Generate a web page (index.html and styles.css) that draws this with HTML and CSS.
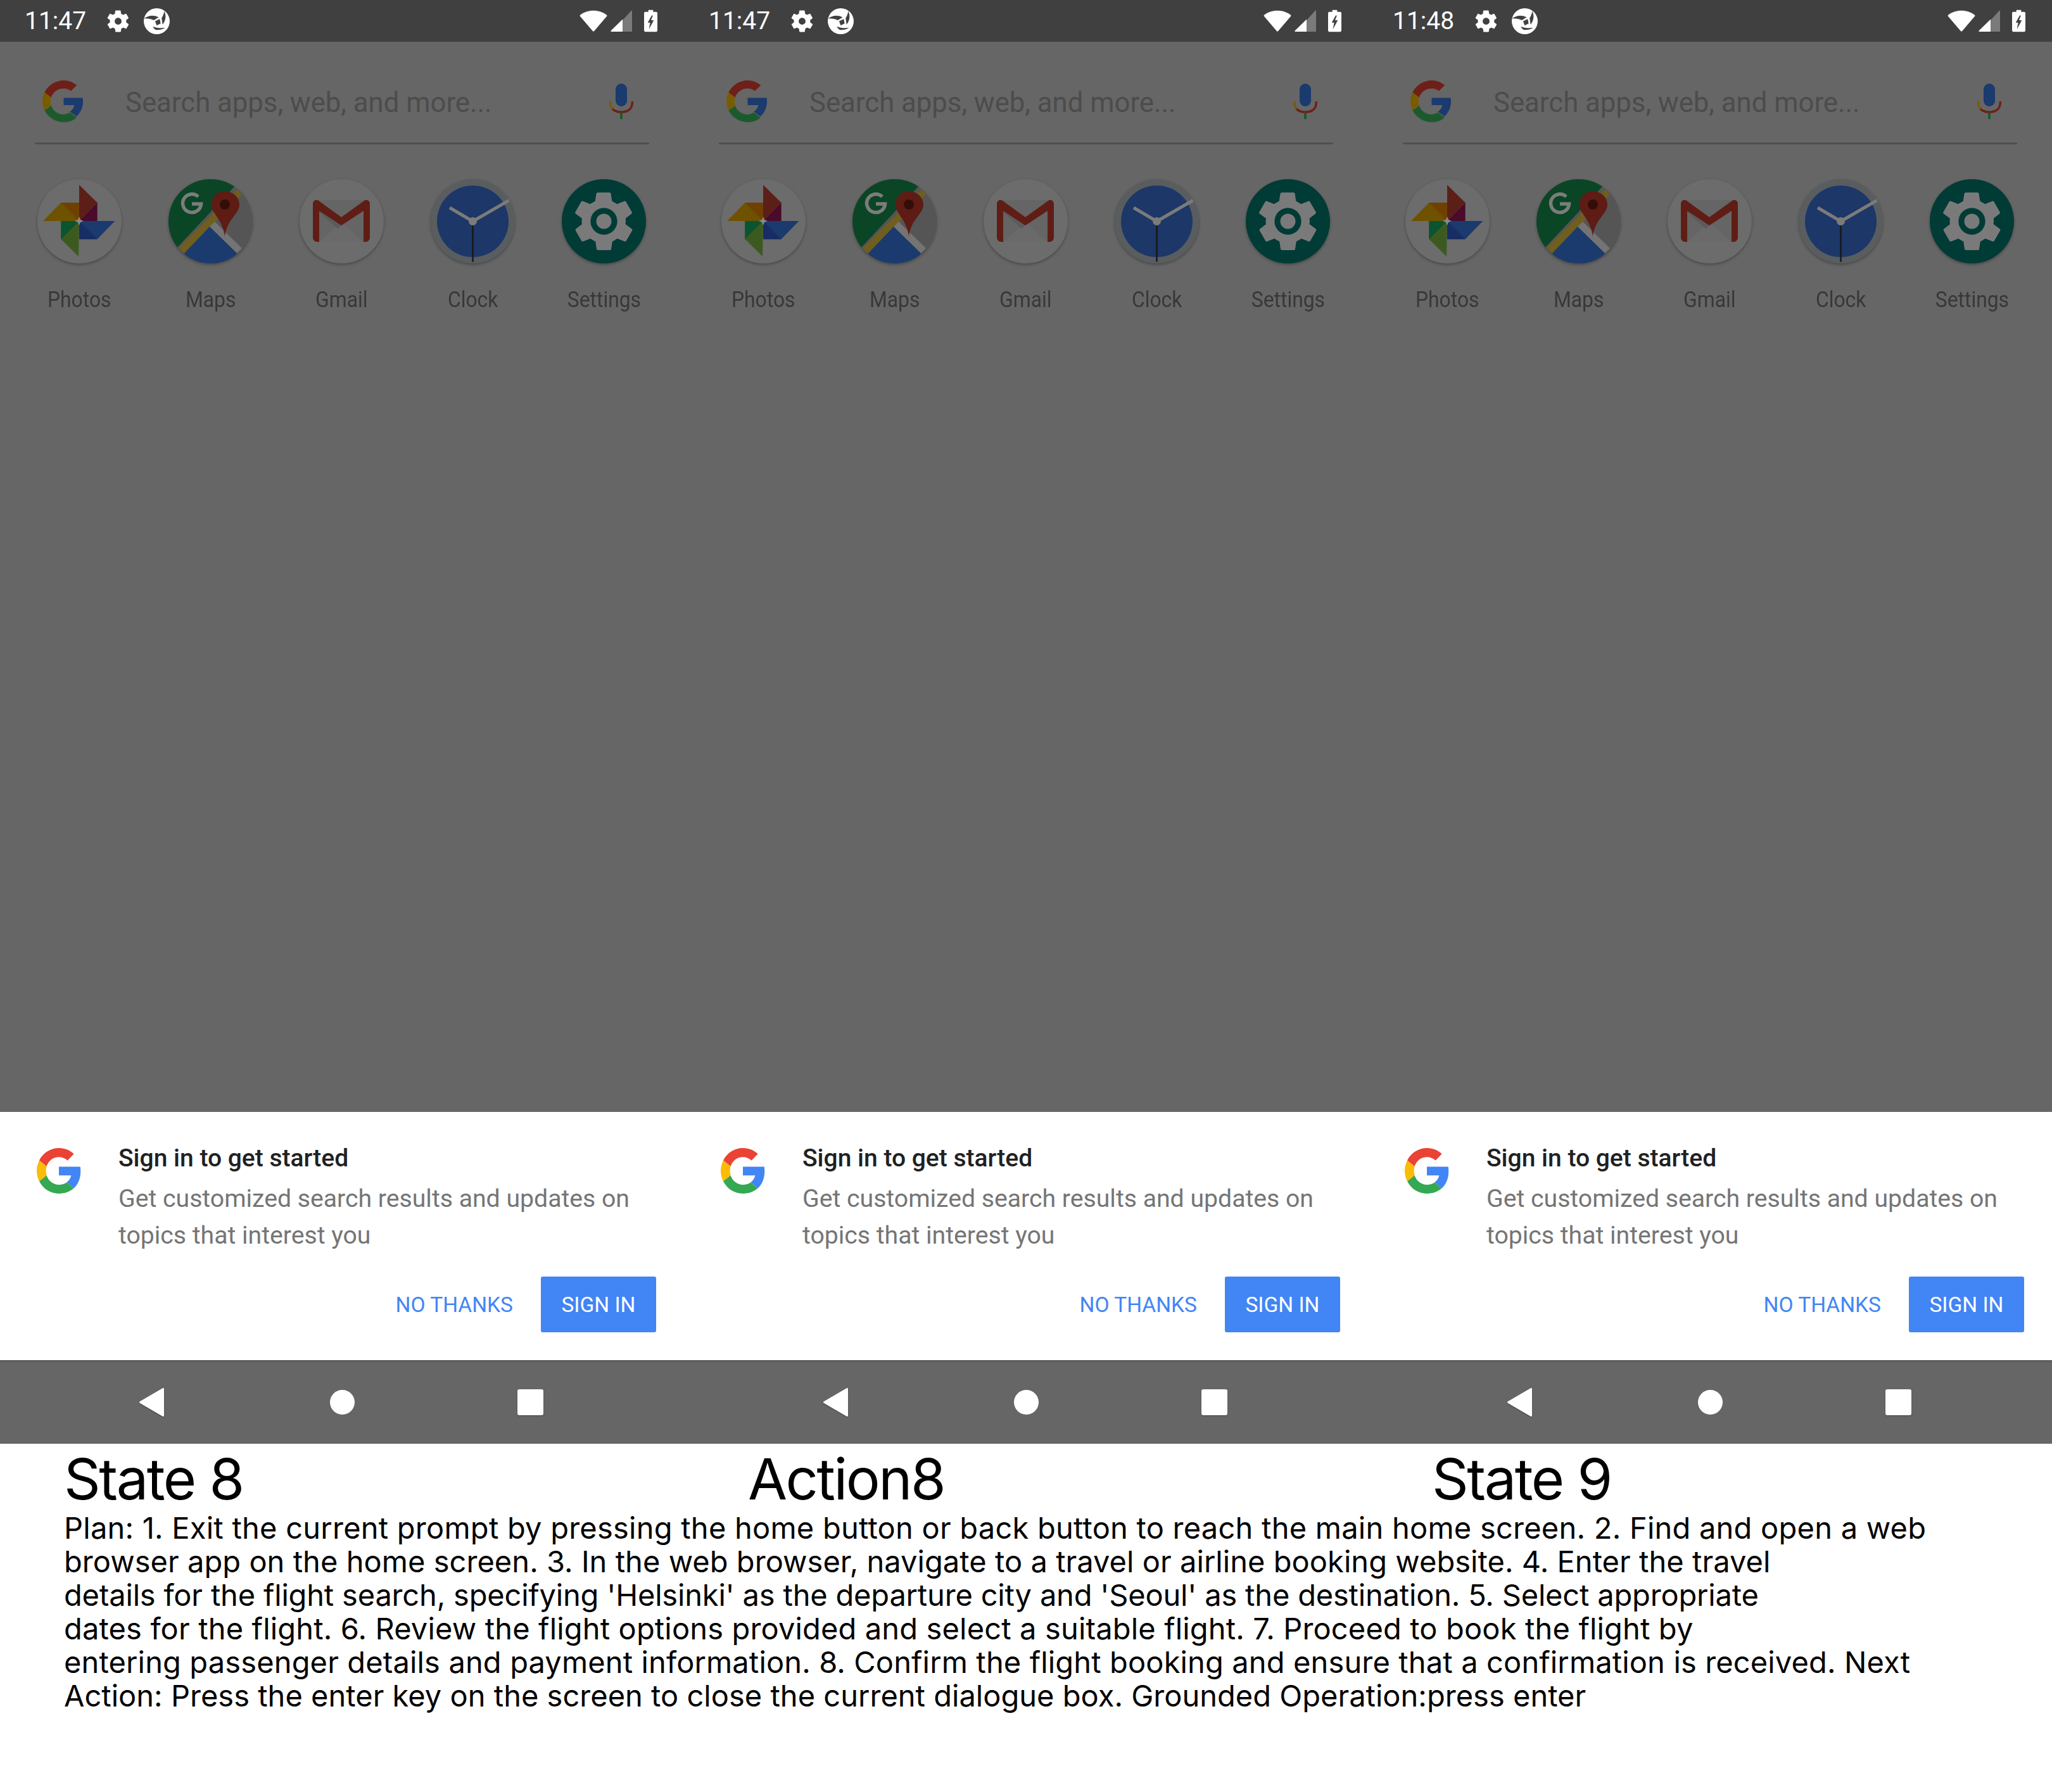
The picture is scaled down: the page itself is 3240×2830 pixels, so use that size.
FILE: index.html
```html
<!DOCTYPE html>
<html lang="en">
<head>
<meta charset="utf-8">
<title>State 8</title>
<link rel="stylesheet" href="styles.css">
</head>
<body>
<svg class="defs" width="0" height="0" aria-hidden="true">
  <defs>
    <symbol id="g-dim" viewBox="1 0.5 44 47" preserveAspectRatio="none">
      <path fill="#1b3a6e" d="M45 24c0-1.600-.1-2.800-.4-4H24v8.200h11.700c-.5 3-2.200 5.600-5 7.300l7.200 5.600C42.300 37 45 31 45 24z"/>
      <path fill="#7a5c00" d="M10.500 19.500 3.300 13.900C1.800 17 1 20.400 1 24s.8 7 2.300 10.100l7.200-5.600C10 27 9.700 25.600 9.700 24s.3-3 .8-4.500z"/>
      <path fill="#6e2018" d="M24 9.500c3.600 0 6.300 1.500 7.800 2.900l6.500-6.300C34.500 2.500 29.700.5 24 .5 15 .5 7.200 6 3.300 13.900l7.200 5.600C12.300 13.700 17.700 9.500 24 9.500z"/>
      <path fill="#1c5a2d" d="M24 47.500c5.900 0 10.900-2 14-5.400l-7.200-5.600c-2 1.400-4 2.300-6.800 2.300-6.300 0-11.700-4.200-13.500-10l-7.200 5.600C7.200 42 15 47.500 24 47.500z"/>
    </symbol>
    <symbol id="g-color" viewBox="0.5 0.5 47 47" preserveAspectRatio="none">
      <path fill="#4285f4" d="M47 24.500c0-1.700-.1-3.300-.4-4.800H24v9.100h13c-.6 3-2.300 5.500-4.900 7.200l7.800 6c4.500-4.200 7.100-10.300 7.100-17.500z"/>
      <path fill="#fbbc05" d="M11 19.300 3.200 13.200C1.500 16.500.5 20.200.5 24s1 7.500 2.700 10.800l7.900-6.100C10.600 27.200 10.300 25.600 10.300 24s.3-3.200.7-4.700z"/>
      <path fill="#ea4335" d="M24 9.800c3.500 0 6.600 1.200 9.100 3.600l6.800-6.800C35.800 2.800 30.400.5 24 .5 14.800.5 6.900 5.800 3.200 13.200l7.800 6.100C12.800 13.700 18 9.800 24 9.800z"/>
      <path fill="#34a853" d="M24 47.500c6.300 0 11.700-2.100 15.900-5.500l-7.800-6c-2.200 1.500-4.900 2.300-8.100 2.300-6 0-11.200-4-13-9.600l-7.800 6.100C6.900 42.200 14.800 47.500 24 47.500z"/>
    </symbol>
    <symbol id="gear" viewBox="0 0 24 24">
      <path fill="currentColor" fill-rule="evenodd" d="M19.400 13c0-.3.1-.6.1-1s0-.7-.1-1l2.100-1.600c.2-.2.2-.4.100-.6l-2-3.500c-.1-.2-.4-.3-.6-.2l-2.500 1c-.5-.4-1.100-.7-1.700-1l-.4-2.600c0-.2-.2-.4-.5-.4h-4c-.2 0-.4.200-.5.400l-.4 2.600c-.6.300-1.200.6-1.700 1l-2.500-1c-.2-.1-.5 0-.6.200l-2 3.500c-.1.200-.1.400.1.600L4.500 11c0 .3-.1.600-.1 1s0 .7.1 1l-2.100 1.600c-.2.200-.2.400-.1.600l2 3.500c.1.200.4.300.6.200l2.500-1c.5.400 1.100.7 1.700 1l.4 2.600c.1.200.3.400.5.400h4c.3 0 .5-.2.500-.4l.4-2.600c.6-.3 1.200-.6 1.700-1l2.500 1c.2.100.5 0 .6-.2l2-3.500c.1-.2.1-.4-.1-.6L19.400 13zM12 15.200a3.200 3.200 0 1 1 0-6.400 3.200 3.200 0 0 1 0 6.400z"/>
    </symbol>
    <symbol id="shutter" viewBox="0 0 40 40">
      <circle cx="20" cy="20" r="20" fill="#fff"/>
      <path fill="#404040" d="M.5 16C7 11 15 10 23 14l-7.500 4.500C11 16 6 15.500.5 16z"/>
      <path fill="#404040" d="M31.500 4.500c3.500 7 2.500 14.500-2.500 20.500l-1.500-10C30 11.500 31 8.500 31.500 4.500z"/>
      <path fill="#404040" d="M14 28c6 2.500 12 3 19 2-5 3-10 4-14.500 3.200-2-.5-3.500-3-4.500-5.200z"/>
      <path fill="#404040" d="M17.500 20 24.500 16.500l1.500 7-6 3z"/>
    </symbol>
    <symbol id="wifi" viewBox="0 0 44 36">
      <path fill="#fff" d="M22 34.500a1.500 1.500 0 0 1-1.200-.6L1 10.800C.3 10 .5 9 1.300 8.500 7 4.200 14 1.800 22 1.800S37 4.200 42.700 8.500c.8.500 1 1.500.3 2.300L23.200 33.900a1.500 1.500 0 0 1-1.200.6z"/>
    </symbol>
    <symbol id="signal" viewBox="0 0 34 34">
      <path fill="#7a7a7a" d="M33 0.500c.6 0 1 .4 1 1V34H19V16z"/>
      <path fill="#fff" d="M19 14.500V34H1.500C.5 34 0 33 .8 32.200z"/>
    </symbol>
    <symbol id="battery" viewBox="0 0 22 36">
      <path fill="#fff" fill-rule="evenodd" d="M7 0h8v3h5c1 0 2 1 2 2v29c0 1-1 2-2 2H2c-1 0-2-1-2-2V5c0-1 1-2 2-2h5zM12.500 9 6 21h4l-2 11 8-15h-4.500l3-8z"/>
    </symbol>
    <symbol id="mic" viewBox="0 0 38 56">
      <rect x="10" y="0" width="18" height="36" rx="9" fill="#1b3a6e"/>
      <path d="M1.500 28c0 6 .8 9 3.500 12" fill="none" stroke="#7a5c00" stroke-width="3.500"/>
      <path d="M5 40c3.500 3.500 9 5 14 5s10.500-1.500 14-5c2.700-3 3.500-6 3.500-12" fill="none" stroke="#6e2018" stroke-width="3.500"/>
      <rect x="17" y="46" width="4" height="10" fill="#1c5a2d"/>
    </symbol>
    <symbol id="back" viewBox="0 0 39 45">
      <path fill="#fff" stroke="#fff" stroke-width="3" stroke-linejoin="round" d="M37.500 1.500v42L1.500 22.500z"/>
    </symbol>
    <symbol id="app-photos" viewBox="0 0 133 133">
      <circle cx="66.500" cy="66.500" r="66.500" fill="#6c6c6c"/>
      <path fill="#6f5200" d="M9 66 37.400 37H66v29z"/>
      <path fill="#704000" d="M37.400 37H66v29z"/>
      <path fill="#5c1f17" d="M66 9l28.600 28L66 66z"/>
      <path fill="#4a0a2a" d="M94.600 37v29H66z"/>
      <path fill="#1b3a6e" d="M66 66h56.400L94.600 94.700H66z"/>
      <path fill="#172d63" d="M66 66l28.600 28.700H66z"/>
      <path fill="#3c5a1f" d="M37.400 66H66l-1 56-27.600-27.300z"/>
      <path fill="#0a5530" d="M37.400 66H66L37.400 94.700z"/>
      <path fill="#8a8a8a" d="m66 59 2 5 5 2-5 2-2 5-2-5-5-2 5-2z"/>
    </symbol>
    <symbol id="app-maps" viewBox="0 0 133 133">
      <clipPath id="maps-clip"><circle cx="66.500" cy="66.500" r="66.500"/></clipPath>
      <g clip-path="url(#maps-clip)">
        <rect width="133" height="133" fill="#555"/>
        <path fill="#0a4526" d="M0 0h115L10 112 0 125z"/>
        <path fill="#6f5e1e" d="M109 16l7 8L25 117l-9-8z"/>
        <path fill="#747474" d="M73 67 116 109l-8 8L65 75z"/>
        <path fill="#1b3a6e" d="M65 75l43 42-10 16H30l-5-16z"/>
        <path fill="#5e1c14" d="M89 19c-13 0-21 10-21 21 0 15 17 22 21 50 4-28 23-35 23-50 0-11-10-21-23-21z"/>
        <circle cx="89" cy="40" r="8" fill="#340d09"/>
        <path fill="none" stroke="#7c7c7c" stroke-width="5.500" d="M47 27.500a14.500 14.500 0 1 0 4.500 11.500H37"/>
      </g>
    </symbol>
    <symbol id="app-gmail" viewBox="0 0 133 133">
      <circle cx="66.500" cy="66.500" r="66.500" fill="#6c6c6c"/>
      <path fill="#656565" d="M25 33h82v66H25z"/>
      <path fill="#6a6a6a" d="M31 99 66 68l35 31z"/>
      <path fill="#5b5b5b" d="M31 45 66 73 60 78 31 52z"/>
      <path fill="#5f1d16" d="M21 39c0-5 5-8 9-5l36 26 36-26c4-3 9 0 9 5v53c0 4-3 7-7 7h-3V50L66 73 31 50v49h-3c-4 0-7-3-7-7z"/>
    </symbol>
    <symbol id="app-clock" viewBox="0 0 133 133">
      <circle cx="66.500" cy="66.500" r="66.500" fill="#595d5f"/>
      <circle cx="66.500" cy="66.500" r="56.500" fill="#1c3768"/>
      <path stroke="#7b7b7b" stroke-width="5" fill="none" d="M30 45 66.500 66.500l57-33"/>
      <path stroke="#181818" stroke-width="2.500" d="M66.500 66.500v64"/>
      <circle cx="66.500" cy="66.500" r="6.500" fill="#7b7b7b"/>
    </symbol>
    <symbol id="app-settings" viewBox="0 0 133 133">
      <circle cx="66.500" cy="66.500" r="66.500" fill="#003b35"/>
      <g transform="translate(66.500 66.500) scale(4.600) translate(-12 -12)">
        <path fill="#7a7a7a" fill-rule="evenodd" d="M19.400 13c0-.3.1-.6.1-1s0-.7-.1-1l2.100-1.600c.2-.2.2-.4.100-.6l-2-3.500c-.1-.2-.4-.3-.6-.2l-2.500 1c-.5-.4-1.100-.7-1.700-1l-.4-2.600c0-.2-.2-.4-.5-.4h-4c-.2 0-.4.200-.5.400l-.4 2.600c-.6.300-1.200.6-1.700 1l-2.500-1c-.2-.1-.5 0-.6.200l-2 3.500c-.1.200-.1.400.1.600L4.500 11c0 .3-.1.600-.1 1s0 .7.1 1l-2.100 1.600c-.2.200-.2.400-.1.600l2 3.500c.1.200.4.300.6.200l2.500-1c.5.400 1.100.7 1.700 1l.4 2.600c.1.200.3.400.5.400h4c.3 0 .5-.2.500-.4l.4-2.600c.6-.3 1.200-.6 1.700-1l2.500 1c.2.100.5 0 .6-.2l2-3.500c.1-.2.1-.4-.1-.6L19.400 13zM12 16.600a4.600 4.600 0 1 1 0-9.200 4.600 4.600 0 0 1 0 9.200z"/>
      </g>
      <circle cx="66.500" cy="66.500" r="12" fill="#7a7a7a"/>
    </symbol>
  </defs>
</svg>

<main class="page">
  <div class="screens">
    <section class="screen">
      <header class="status"><span class="time">11:47</span><svg class="st-gear"><use href="#gear"/></svg><svg class="st-shutter"><use href="#shutter"/></svg><span class="grow"></span><svg class="st-wifi"><use href="#wifi"/></svg><svg class="st-signal"><use href="#signal"/></svg><svg class="st-battery"><use href="#battery"/></svg></header>
      <div class="home">
        <div class="search"><svg class="search-g"><use href="#g-dim"/></svg><span class="search-text">Search apps, web, and more...</span><svg class="search-mic"><use href="#mic"/></svg></div>
        <div class="apps">
          <div class="app"><svg class="app-icon"><use href="#app-photos"/></svg><span class="app-label">Photos</span></div>
          <div class="app"><svg class="app-icon"><use href="#app-maps"/></svg><span class="app-label">Maps</span></div>
          <div class="app"><svg class="app-icon"><use href="#app-gmail"/></svg><span class="app-label">Gmail</span></div>
          <div class="app"><svg class="app-icon"><use href="#app-clock"/></svg><span class="app-label">Clock</span></div>
          <div class="app"><svg class="app-icon"><use href="#app-settings"/></svg><span class="app-label">Settings</span></div>
        </div>
      </div>
      <div class="sheet">
        <div class="sheet-main"><svg class="sheet-g"><use href="#g-color"/></svg><div class="sheet-copy"><h2 class="sheet-title">Sign in to get started</h2><p class="sheet-text">Get customized search results and updates on<br>topics that interest you</p></div></div>
        <div class="sheet-actions"><span class="btn-text">NO THANKS</span><span class="btn-fill">SIGN IN</span></div>
      </div>
      <nav class="nav"><svg class="nav-back"><use href="#back"/></svg><span class="nav-home"></span><span class="nav-recent"></span></nav>
    </section>
    <section class="screen">
      <header class="status"><span class="time">11:47</span><svg class="st-gear"><use href="#gear"/></svg><svg class="st-shutter"><use href="#shutter"/></svg><span class="grow"></span><svg class="st-wifi"><use href="#wifi"/></svg><svg class="st-signal"><use href="#signal"/></svg><svg class="st-battery"><use href="#battery"/></svg></header>
      <div class="home">
        <div class="search"><svg class="search-g"><use href="#g-dim"/></svg><span class="search-text">Search apps, web, and more...</span><svg class="search-mic"><use href="#mic"/></svg></div>
        <div class="apps">
          <div class="app"><svg class="app-icon"><use href="#app-photos"/></svg><span class="app-label">Photos</span></div>
          <div class="app"><svg class="app-icon"><use href="#app-maps"/></svg><span class="app-label">Maps</span></div>
          <div class="app"><svg class="app-icon"><use href="#app-gmail"/></svg><span class="app-label">Gmail</span></div>
          <div class="app"><svg class="app-icon"><use href="#app-clock"/></svg><span class="app-label">Clock</span></div>
          <div class="app"><svg class="app-icon"><use href="#app-settings"/></svg><span class="app-label">Settings</span></div>
        </div>
      </div>
      <div class="sheet">
        <div class="sheet-main"><svg class="sheet-g"><use href="#g-color"/></svg><div class="sheet-copy"><h2 class="sheet-title">Sign in to get started</h2><p class="sheet-text">Get customized search results and updates on<br>topics that interest you</p></div></div>
        <div class="sheet-actions"><span class="btn-text">NO THANKS</span><span class="btn-fill">SIGN IN</span></div>
      </div>
      <nav class="nav"><svg class="nav-back"><use href="#back"/></svg><span class="nav-home"></span><span class="nav-recent"></span></nav>
    </section>
    <section class="screen">
      <header class="status"><span class="time">11:48</span><svg class="st-gear"><use href="#gear"/></svg><svg class="st-shutter"><use href="#shutter"/></svg><span class="grow"></span><svg class="st-wifi"><use href="#wifi"/></svg><svg class="st-signal"><use href="#signal"/></svg><svg class="st-battery"><use href="#battery"/></svg></header>
      <div class="home">
        <div class="search"><svg class="search-g"><use href="#g-dim"/></svg><span class="search-text">Search apps, web, and more...</span><svg class="search-mic"><use href="#mic"/></svg></div>
        <div class="apps">
          <div class="app"><svg class="app-icon"><use href="#app-photos"/></svg><span class="app-label">Photos</span></div>
          <div class="app"><svg class="app-icon"><use href="#app-maps"/></svg><span class="app-label">Maps</span></div>
          <div class="app"><svg class="app-icon"><use href="#app-gmail"/></svg><span class="app-label">Gmail</span></div>
          <div class="app"><svg class="app-icon"><use href="#app-clock"/></svg><span class="app-label">Clock</span></div>
          <div class="app"><svg class="app-icon"><use href="#app-settings"/></svg><span class="app-label">Settings</span></div>
        </div>
      </div>
      <div class="sheet">
        <div class="sheet-main"><svg class="sheet-g"><use href="#g-color"/></svg><div class="sheet-copy"><h2 class="sheet-title">Sign in to get started</h2><p class="sheet-text">Get customized search results and updates on<br>topics that interest you</p></div></div>
        <div class="sheet-actions"><span class="btn-text">NO THANKS</span><span class="btn-fill">SIGN IN</span></div>
      </div>
      <nav class="nav"><svg class="nav-back"><use href="#back"/></svg><span class="nav-home"></span><span class="nav-recent"></span></nav>
    </section>
  </div>
  <div class="captions">
    <div class="caption-row"><span class="caption">State 8</span><span class="caption">Action8</span><span class="caption">State 9</span></div>
    <p class="plan"><span class="line line-1">Plan: 1. Exit the current prompt by pressing the home button or back button to reach the main home screen. 2. Find and open a web</span><span class="line line-2">browser app on the home screen. 3. In the web browser, navigate to a travel or airline booking website. 4. Enter the travel</span><span class="line line-3">details for the flight search, specifying 'Helsinki' as the departure city and 'Seoul' as the destination. 5. Select appropriate</span><span class="line line-4">dates for the flight. 6. Review the flight options provided and select a suitable flight. 7. Proceed to book the flight by</span><span class="line line-5">entering passenger details and payment information. 8. Confirm the flight booking and ensure that a confirmation is received. Next</span><span class="line line-6">Action: Press the enter key on the screen to close the current dialogue box. Grounded Operation:press enter</span></p>
  </div>
</main>
</body>
</html>
```

FILE: styles.css
```css
* { box-sizing: border-box; }
html, body { margin: 0; padding: 0; background: #fff; }
.defs { position: absolute; }
.page { width: 3240px; height: 2830px; overflow: hidden; background: #fff; font-family: Roboto, sans-serif; }
.screens { display: flex; height: 2280px; }
.screen { width: 1080px; height: 2280px; flex: none; display: flex; flex-direction: column; background: #666; }

.status { height: 66px; background: #404040; display: flex; align-items: center; padding: 0 42px 0 39px; color: #fff; flex: none; }
.time { font-size: 39px; line-height: 66px; font-weight: 400; width: 97px; white-space: nowrap; }
.st-gear { width: 41px; height: 41px; margin-left: 30px; color: #fff; }
.st-shutter { width: 41px; height: 41px; margin-left: 20px; }
.grow { flex: 1; }
.st-wifi { width: 44px; height: 36px; }
.st-signal { width: 34px; height: 34px; margin-left: 5px; }
.st-battery { width: 21px; height: 36px; margin-left: 19px; }

.home { flex: 1; display: flex; flex-direction: column; padding-left: 22px; }
.search { width: 970px; height: 162px; margin-left: 33px; flex: none; display: flex; align-items: center; border-bottom: 3px solid #4f4f4f; padding: 29px 25px 0 12px; }
.search-g { width: 64px; height: 66px; flex: none; }
.search-text { font-size: 43.7px; color: #4c4c4c; margin-left: 67px; padding-top: 3px; flex: 1; white-space: nowrap; }
.search-mic { width: 38px; height: 56px; flex: none; }

.apps { display: flex; }
.app { width: 207px; flex: none; display: flex; flex-direction: column; align-items: center; padding-top: 55px; }
.app-icon { width: 133px; height: 133px; filter: drop-shadow(0 2px 2px rgba(0,0,0,.3)); overflow: visible; }
.app-label { margin-top: 36px; font-size: 35px; line-height: 44px; color: #383838; transform: scaleX(.91); }

.sheet { height: 392px; background: #fff; flex: none; display: flex; flex-direction: column; padding: 0 44px 0 58px; }
.sheet-main { display: flex; padding-top: 45px; }
.sheet-g { width: 70px; height: 72px; flex: none; margin-top: 12px; }
.sheet-copy { margin-left: 59px; }
.sheet-title { margin: 0; font-size: 39px; line-height: 56px; font-weight: 500; color: #212121; white-space: nowrap; }
.sheet-text { margin: 7px 0 0; font-size: 39.2px; line-height: 58px; color: #757575; white-space: nowrap; }
.sheet-actions { display: flex; justify-content: flex-end; align-items: center; margin-top: 36px; }
.btn-text { color: #4285f4; font-size: 33.5px; margin-right: 44px; }
.btn-fill { width: 182px; height: 88px; background: #4285f4; border-radius: 3px; color: #fff; font-size: 33.5px; display: flex; align-items: center; justify-content: center; }

.nav { height: 132px; flex: none; background: #666; box-shadow: inset 0 5px 3px -3px #555; display: flex; align-items: center; padding-left: 220px; }
.nav-back { width: 39px; height: 45px; filter: drop-shadow(0 1px 1px rgba(0,0,0,.3)); }
.nav-home { width: 39px; height: 39px; border-radius: 50%; background: #fff; margin-left: 262px; }
.nav-recent { width: 41px; height: 41px; border-radius: 3px; background: #fff; margin-left: 257px; box-shadow: 0 1px 2px rgba(0,0,0,.3); }

.captions { padding-left: 101px; font-family: Inter, sans-serif; color: #000; }
.caption-row { display: flex; height: 60px; margin-top: 26px; }
.caption { width: 1080px; flex: none; font-size: 90px; line-height: 60px; letter-spacing: -2.5px; white-space: nowrap; }
.plan { margin: 20px 0 0; font-size: 47px; line-height: 53px; white-space: nowrap; }
.line { display: block; }
.line-1 { letter-spacing: .24px; }
.line-2 { letter-spacing: .05px; }
.line-3 { letter-spacing: -.18px; }
.line-4 { letter-spacing: .155px; }
.line-5 { letter-spacing: .14px; }
.line-6 { letter-spacing: .02px; }
```
